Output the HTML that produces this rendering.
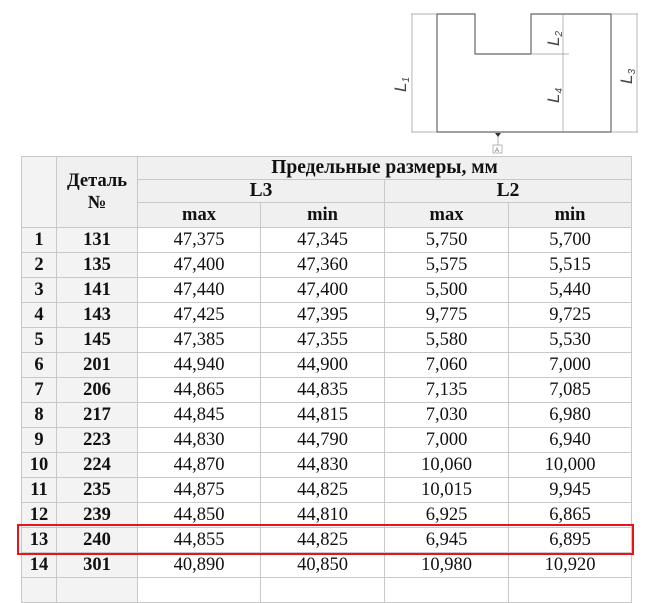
<!DOCTYPE html>
<html><head><meta charset="utf-8"><style>
body{margin:0;width:666px;height:580px;background:#fff;overflow:hidden;position:relative;font-family:"Liberation Serif",serif;}
table{position:absolute;left:21px;top:156px;border-collapse:collapse;table-layout:fixed;width:610px;}
td{border:1px solid #c8c8c8;text-align:center;padding:0;font-size:18.5px;color:#111;height:24px;line-height:22px;overflow:hidden;white-space:nowrap;}
.h{background:#f0f0f0;font-weight:bold;}
.g{background:#f3f3f3;font-weight:bold;}
.red{position:absolute;left:17px;top:524px;width:613px;height:27px;border:2px solid #e8141a;}
</style></head><body>
<svg width="666" height="160" style="position:absolute;left:0;top:0" fill="none">
<g stroke="#666" stroke-width="1.2">
<path d="M437 14H475V54H531V14H611V132H437Z"/>
</g>
<g stroke="#999" stroke-width="0.7">
<path d="M411 14H437M411 132H437M412 14V132"/>
<path d="M611 14H638M611 132H638M637 14V132"/>
<path d="M563 14V132M531 54H569"/>
<path d="M498 132V145"/>
<rect x="493" y="145" width="9" height="8"/>
</g>
<path d="M495 133h6l-3 4z" fill="#333"/>
<g fill="#444" font-family="Liberation Sans" font-style="italic" font-size="17">
<text transform="translate(406 92) rotate(-90)">L<tspan font-size="10" dy="3">1</tspan></text>
<text transform="translate(559 46) rotate(-90)">L<tspan font-size="10" dy="3">2</tspan></text>
<text transform="translate(632 84) rotate(-90)">L<tspan font-size="10" dy="3">3</tspan></text>
<text transform="translate(559 103) rotate(-90)">L<tspan font-size="10" dy="3">4</tspan></text>
</g>
<text x="495" y="152" font-size="6" fill="#666" font-family="Liberation Sans">A</text>
</svg>
<table>
<colgroup><col style="width:35px"><col style="width:81px"><col style="width:123px"><col style="width:124px"><col style="width:124px"><col style="width:123px"></colgroup>
<tr><td class="h" rowspan="3" style="background:#f3f3f3"></td><td class="h" rowspan="3" style="white-space:normal">Деталь<br>№</td><td class="h" colspan="4" style="height:22px;font-size:19.5px">Предельные размеры, мм</td></tr>
<tr><td class="h" colspan="2" style="height:22px;font-size:19.5px">L3</td><td class="h" colspan="2" style="height:22px;font-size:19.5px">L2</td></tr>
<tr><td class="h" style="height:23px">max</td><td class="h">min</td><td class="h">max</td><td class="h">min</td></tr>
<tr><td class="g">1</td><td class="g">131</td><td>47,375</td><td>47,345</td><td>5,750</td><td>5,700</td></tr>
<tr><td class="g">2</td><td class="g">135</td><td>47,400</td><td>47,360</td><td>5,575</td><td>5,515</td></tr>
<tr><td class="g">3</td><td class="g">141</td><td>47,440</td><td>47,400</td><td>5,500</td><td>5,440</td></tr>
<tr><td class="g">4</td><td class="g">143</td><td>47,425</td><td>47,395</td><td>9,775</td><td>9,725</td></tr>
<tr><td class="g">5</td><td class="g">145</td><td>47,385</td><td>47,355</td><td>5,580</td><td>5,530</td></tr>
<tr><td class="g">6</td><td class="g">201</td><td>44,940</td><td>44,900</td><td>7,060</td><td>7,000</td></tr>
<tr><td class="g">7</td><td class="g">206</td><td>44,865</td><td>44,835</td><td>7,135</td><td>7,085</td></tr>
<tr><td class="g">8</td><td class="g">217</td><td>44,845</td><td>44,815</td><td>7,030</td><td>6,980</td></tr>
<tr><td class="g">9</td><td class="g">223</td><td>44,830</td><td>44,790</td><td>7,000</td><td>6,940</td></tr>
<tr><td class="g">10</td><td class="g">224</td><td>44,870</td><td>44,830</td><td>10,060</td><td>10,000</td></tr>
<tr><td class="g">11</td><td class="g">235</td><td>44,875</td><td>44,825</td><td>10,015</td><td>9,945</td></tr>
<tr><td class="g">12</td><td class="g">239</td><td>44,850</td><td>44,810</td><td>6,925</td><td>6,865</td></tr>
<tr><td class="g">13</td><td class="g">240</td><td>44,855</td><td>44,825</td><td>6,945</td><td>6,895</td></tr>
<tr><td class="g">14</td><td class="g">301</td><td>40,890</td><td>40,850</td><td>10,980</td><td>10,920</td></tr>
<tr><td class="g"></td><td class="g"></td><td></td><td></td><td></td><td></td></tr>
</table>
<div class="red"></div>
</body></html>
